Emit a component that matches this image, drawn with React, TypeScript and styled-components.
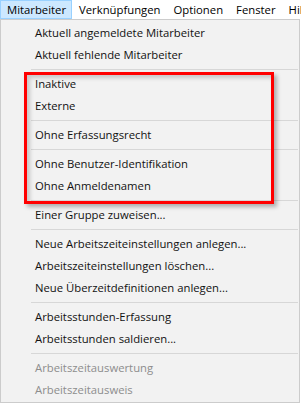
import * as React from 'react';
import styled, { createGlobalStyle } from 'styled-components';

const GlobalStyle = createGlobalStyle`
  html, body {
    margin: 0;
    padding: 0;
    background: #ffffff;
  }
  body {
    font-family: 'Open Sans', 'Noto Sans', sans-serif;
    font-size: 11.3px;
    color: #000;
  }
`;

type Entry = { label: string; disabled?: boolean } | 'sep';

const entries: Entry[] = [
  { label: 'Aktuell angemeldete Mitarbeiter' },
  { label: 'Aktuell fehlende Mitarbeiter' },
  'sep',
  { label: 'Inaktive' },
  { label: 'Externe' },
  'sep',
  { label: 'Ohne Erfassungsrecht' },
  'sep',
  { label: 'Ohne Benutzer-Identifikation' },
  { label: 'Ohne Anmeldenamen' },
  'sep',
  { label: 'Einer Gruppe zuweisen...' },
  'sep',
  { label: 'Neue Arbeitszeiteinstellungen anlegen...' },
  { label: 'Arbeitszeiteinstellungen löschen...' },
  { label: 'Neue Überzeitdefinitionen anlegen...' },
  'sep',
  { label: 'Arbeitsstunden-Erfassung' },
  { label: 'Arbeitsstunden saldieren...' },
  'sep',
  { label: 'Arbeitszeitauswertung', disabled: true },
  { label: 'Arbeitszeitausweis', disabled: true },
];

const menus = ['Mitarbeiter', 'Verknüpfungen', 'Optionen', 'Fenster', 'Hilfe'];

const Screen = styled.div`
  width: 301px;
  height: 404px;
  overflow: hidden;
  background: #ffffff;
`;

const MenuBar = styled.div`
  display: flex;
  height: 19px;
  background: #ffffff;
  white-space: nowrap;
`;

const MenuTitle = styled.div<{ $active?: boolean }>`
  box-sizing: border-box;
  height: 19px;
  padding: 0 5px 1px 6px;
  display: flex;
  align-items: center;
  border: 1px solid ${p => (p.$active ? '#99d1ff' : 'transparent')};
  background: ${p => (p.$active ? '#cce8ff' : 'transparent')};
`;

const Dropdown = styled.div`
  position: relative;
  box-sizing: border-box;
  width: 300px;
  border: 1px solid #cccccc;
  background: #f2f2f2;
  padding: 2px 0 1px;
`;

const Item = styled.div<{ $disabled?: boolean }>`
  height: 22px;
  padding-left: 34px;
  display: flex;
  align-items: center;
  padding-bottom: 1px;
  box-sizing: border-box;
  white-space: nowrap;
  color: ${p => (p.$disabled ? '#8d8d8d' : '#111111')};
`;

const Separator = styled.div`
  height: 1px;
  margin: 3px 1px 3px 30px;
  background: #d7d7d7;
`;

const Highlight = styled.div`
  position: absolute;
  left: 23px;
  top: 52px;
  width: 250px;
  height: 132px;
  box-sizing: border-box;
  border: 3px solid #ff0000;
  box-shadow: 3px 3px 4px rgba(0, 0, 0, 0.28), inset 3px 3px 4px rgba(0, 0, 0, 0.18);
  pointer-events: none;
`;

const App = () => {
  return (
    <Screen>
      <GlobalStyle />
      <MenuBar>
        {menus.map((m, i) => (
          <MenuTitle key={m} $active={i === 0}>
            {m}
          </MenuTitle>
        ))}
      </MenuBar>
      <Dropdown>
        {entries.map((e, i) =>
          e === 'sep' ? (
            <Separator key={i} />
          ) : (
            <Item key={i} $disabled={e.disabled}>
              {e.label}
            </Item>
          )
        )}
        <Highlight />
      </Dropdown>
    </Screen>
  );
};

export default App;
